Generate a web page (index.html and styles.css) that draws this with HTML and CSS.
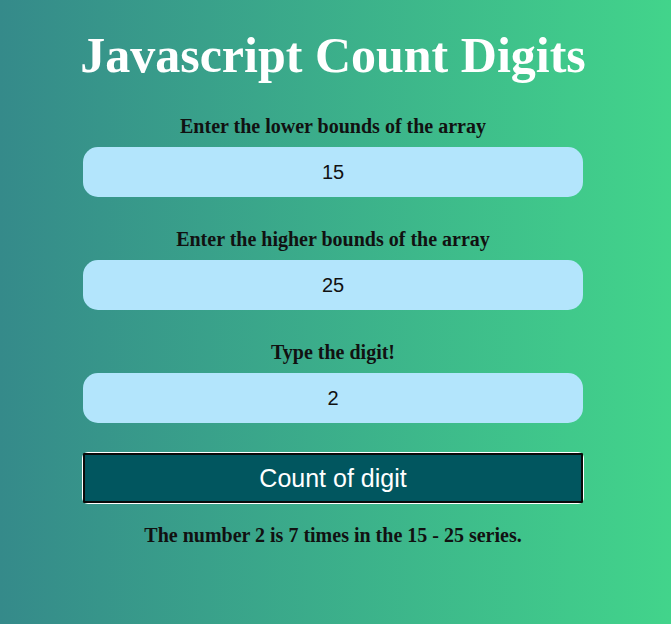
FILE: index.html
```html
<!DOCTYPE html>
<html lang="en">
<head>
<meta charset="utf-8">
<title>Javascript Count Digits</title>
<link rel="stylesheet" href="styles.css">
</head>
<body>
  <main class="app">
    <h1 class="title">Javascript Count Digits</h1>
    <label class="field-label" for="lower">Enter the lower bounds of the array</label>
    <input class="field" id="lower" type="text" value="15">
    <label class="field-label" for="higher">Enter the higher bounds of the array</label>
    <input class="field" id="higher" type="text" value="25">
    <label class="field-label" for="digit">Type the digit!</label>
    <input class="field" id="digit" type="text" value="2">
    <button class="count-btn" type="button">Count of digit</button>
    <p class="result">The number 2 is 7 times in the 15 - 25 series.</p>
  </main>
</body>
</html>
```
FILE: styles.css
```css
* { box-sizing: border-box; }

html, body {
  margin: 0;
  height: 100%;
}

body {
  background: linear-gradient(to right, #358a8a, #42d48b);
  font-family: "Liberation Serif", "Times New Roman", serif;
  color: #111;
  padding-right: 5px;
}

.app {
  width: 500px;
  margin: 0 auto;
  display: flex;
  flex-direction: column;
  align-items: stretch;
  padding-top: 25px;
}

.title {
  margin: 0 -20px 29px;
  font-size: 50px;
  line-height: 60px;
  font-weight: bold;
  color: #fff;
  text-align: center;
  white-space: nowrap;
}

.field-label {
  display: block;
  font-size: 20px;
  line-height: 24px;
  font-weight: bold;
  text-align: center;
  margin-bottom: 9px;
}

.field {
  display: block;
  width: 100%;
  height: 50px;
  border: none;
  border-radius: 15px;
  background: #b3e5fc;
  font-family: "Liberation Sans", Arial, sans-serif;
  font-size: 20px;
  color: #111;
  text-align: center;
  margin-bottom: 30px;
  outline: none;
}

.count-btn {
  position: relative;
  display: block;
  width: 100%;
  height: 50px;
  border: none;
  border-radius: 5px;
  background: #01565f;
  box-shadow: 0 0 0 1px #fff;
  color: #fff;
  font-family: "Liberation Sans", Arial, sans-serif;
  font-size: 25px;
  padding: 0;
  cursor: pointer;
}

.count-btn::after {
  content: "";
  position: absolute;
  inset: 0;
  border: 2px solid #0a0a0a;
  border-radius: 1px;
}

.result {
  margin: 20px 0 0;
  font-size: 20px;
  line-height: 24px;
  font-weight: bold;
  text-align: center;
}
```
